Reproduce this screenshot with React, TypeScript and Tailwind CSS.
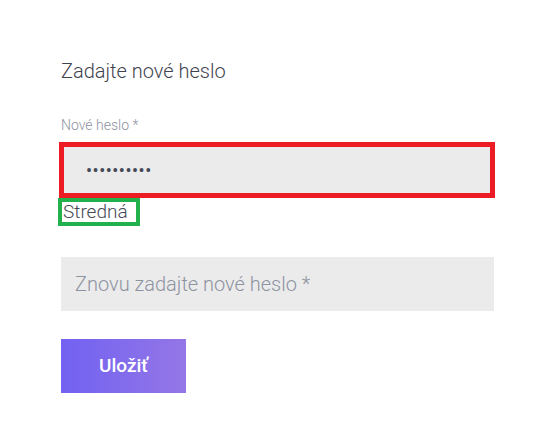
export default function App() {
  return (
    <div className="h-[428px] w-[539px] bg-white pl-[61px] pt-[59px] font-['Roboto',sans-serif]">
      <h2 className="text-[20px] font-light leading-[24px] text-[#3f434e]">
        Zadajte nové heslo
      </h2>

      <label className="mt-[34px] block text-[14px] font-light leading-[16px] text-[#8e93a1]">
        Nové heslo *
      </label>

      {/* red/green boxes are annotations drawn over the original form */}
      <div className="-ml-[2px] mt-[9px] h-[56px] w-[436px] border-[5px] border-[#ed1c24] bg-[#ebebeb]">
        <input
          type="password"
          readOnly
          value="heslo12345"
          className="h-full w-full bg-transparent pl-[22px] text-[18px] tracking-[0.5px] text-[#454956] outline-none"
        />
      </div>
      <div className="-ml-[3px] h-[28px] w-[82px] border-4 border-[#22b14c] bg-white pl-px text-[19px] font-light leading-[20px] text-[#454956]">
        Stredná
      </div>

      <input
        type="password"
        placeholder="Znovu zadajte nové heslo *"
        className="mt-[31px] block h-[54px] w-[433px] bg-[#ebebeb] px-[14px] text-[20px] font-light text-[#454956] outline-none placeholder:text-[#8e93a1]"
      />

      <button className="mt-[28px] h-[54px] w-[125px] bg-gradient-to-r from-[#7261f2] to-[#9476e6] text-[19px] font-medium text-white">
        Uložiť
      </button>
    </div>
  );
}
